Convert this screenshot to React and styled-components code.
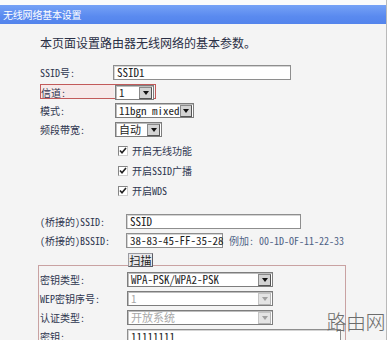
import React from "react";
import styled, { createGlobalStyle } from "styled-components";

const Global = createGlobalStyle`
  html, body { margin: 0; padding: 0; background: #ffffff; }
  body { font-family: "Noto Sans Mono CJK SC", "Noto Sans CJK SC", "Liberation Mono", monospace; }
`;

const FONT = `"Noto Sans Mono CJK SC", "Noto Sans CJK SC", "Liberation Mono", monospace`;

const Page = styled.div`
  position: relative;
  width: 386px;
  height: 340px;
  overflow: hidden;
  background: #f4f4f4;
  border-right: 1px solid #b9b9b9;
  font-family: ${FONT};
  font-size: 10px;
  color: #2f3650;
`;

const TopGap = styled.div`
  height: 5px;
  background: #fbfbfb;
`;

const Header = styled.div`
  height: 19px;
  line-height: 19px;
  padding-left: 3px;
  background: linear-gradient(#76a2f6, #5a8aef 60%, #5384ec);
  color: #ffffff;
  font-family: "Noto Sans CJK SC", sans-serif;
  font-size: 10px;
  letter-spacing: -0.2px;
`;

const Desc = styled.div`
  margin-top: 11px;
  padding-left: 40px;
  height: 16px;
  line-height: 16px;
  font-size: 12px;
  color: #2a2f45;
`;

const Section = styled.div`
  display: flex;
  flex-direction: column;
  margin-top: ${(p) => p.$top || 0}px;
  padding-left: 40px;
`;

const Row = styled.div`
  display: grid;
  grid-template-columns: ${(p) => p.$label}px auto 1fr;
  align-items: center;
  height: ${(p) => p.$h || 19}px;
`;

const Label = styled.span`
  white-space: nowrap;
  line-height: 14px;
  font-size: 10px;
`;

const TextInput = styled.div`
  box-sizing: border-box;
  width: ${(p) => p.$w}px;
  height: 15px;
  line-height: 13px;
  padding-left: 3px;
  margin-left: ${(p) => p.$ml || 0}px;
  background: #ffffff;
  border: 1px solid #8e8e8e;
  box-shadow: inset 1px 1px 0 #d4d4d4;
  color: #1d1d1d;
  font-size: 11px;
  white-space: nowrap;
`;

const SelectBox = styled.div`
  box-sizing: border-box;
  display: flex;
  align-items: center;
  width: ${(p) => p.$w}px;
  height: 15px;
  background: #ffffff;
  border: 1px solid #7d7d7d;
  box-shadow: inset 1px 1px 0 #bdbdbd;
  color: ${(p) => (p.$disabled ? "#a8a8a8" : "#1d1d1d")};
  font-size: 11px;
`;

const SelectText = styled.span`
  flex: 1;
  padding-left: 3px;
  line-height: 13px;
  white-space: nowrap;
`;

const Arrow = styled.span`
  box-sizing: border-box;
  width: 13px;
  height: 12px;
  margin-right: 1px;
  display: flex;
  align-items: center;
  justify-content: center;
  background: ${(p) => (p.$disabled ? "#e4e4e4" : "#d3d3d3")};
  border: 1px solid ${(p) => (p.$disabled ? "#c4c4c4" : "#8a8a8a")};
  border-right-color: ${(p) => (p.$disabled ? "#b4b4b4" : "#555")};
  border-bottom-color: ${(p) => (p.$disabled ? "#b4b4b4" : "#555")};
`;

const Tri = styled.span`
  width: 0;
  height: 0;
  border-left: 3px solid transparent;
  border-right: 3px solid transparent;
  border-top: 4px solid ${(p) => (p.$disabled ? "#a0a0a0" : "#111")};
`;

function Select({ w, value, disabled }) {
  return (
    <SelectBox $w={w} $disabled={disabled}>
      <SelectText>{value}</SelectText>
      <Arrow $disabled={disabled}>
        <Tri $disabled={disabled} />
      </Arrow>
    </SelectBox>
  );
}

const Highlight = styled.div`
  box-sizing: border-box;
  display: grid;
  grid-template-columns: 74px auto;
  align-items: center;
  width: 116px;
  height: 15px;
  border: 1px solid #c25a5a;
  background: linear-gradient(90deg, #f6e9e9 0, #f6e9e9 73px, #f4f4f4 73px);
`;

const CheckRow = styled.div`
  display: flex;
  align-items: center;
  height: 20px;
  padding-left: 78px;
  gap: 4px;
`;

const CheckBox = styled.span`
  box-sizing: border-box;
  width: 10px;
  height: 10px;
  background: #ffffff;
  border: 1px solid #858585;
  border-right-color: #cfcfcf;
  border-bottom-color: #cfcfcf;
  display: flex;
  align-items: center;
  justify-content: center;
`;

const ExampleText = styled.span`
  margin-left: 6px;
  font-size: 10px;
  color: #4e6285;
  white-space: nowrap;
`;

const Button = styled.div`
  box-sizing: border-box;
  width: 25px;
  height: 14px;
  margin-left: 88px;
  margin-top: 3px;
  display: flex;
  align-items: center;
  justify-content: center;
  background: #e7e7ea;
  border: 1px solid #9a9aa0;
  border-right-color: #5c5c64;
  border-bottom-color: #5c5c64;
  font-family: "Noto Sans CJK SC", sans-serif;
  font-size: 11px;
  color: #222;
`;

const KeyBox = styled.div`
  box-sizing: border-box;
  margin-left: 38px;
  width: 308px;
  height: 90px;
  border: 1px solid #c9a2a2;
  border-bottom: none;
  padding-top: 4px;
  padding-left: 1px;
  display: flex;
  flex-direction: column;
`;

const Watermark = styled.div`
  position: absolute;
  right: 1px;
  bottom: 4px;
  font-family: "Noto Sans CJK SC", sans-serif;
  font-weight: 300;
  font-size: 20px;
  letter-spacing: -0.5px;
  color: #6c6c6c;
`;

function Check() {
  return (
    <CheckBox>
      <svg width="8" height="8" viewBox="0 0 8 8">
        <path d="M1 3.5 L3 5.8 L7 1" fill="none" stroke="#222" strokeWidth="1.6" />
      </svg>
    </CheckBox>
  );
}

export default function App() {
  return (
    <>
      <Global />
      <Page>
        <TopGap />
        <Header>无线网络基本设置</Header>
        <Desc>本页面设置路由器无线网络的基本参数。</Desc>

        <Section $top={12}>
          <Row $label={73}>
            <Label>SSID号:</Label>
            <TextInput $w={178}>SSID1</TextInput>
          </Row>
          <Row $label={0}>
            <span />
            <Highlight>
              <Label>信道:</Label>
              <Select w={39} value="1" />
            </Highlight>
          </Row>
          <Row $label={75}>
            <Label>模式:</Label>
            <Select w={79} value="11bgn mixed" />
          </Row>
          <Row $label={75}>
            <Label>频段带宽:</Label>
            <Select w={47} value="自动" />
          </Row>
        </Section>

        <Section $top={2}>
          <CheckRow>
            <Check />
            <Label>开启无线功能</Label>
          </CheckRow>
          <CheckRow>
            <Check />
            <Label>开启SSID广播</Label>
          </CheckRow>
          <CheckRow>
            <Check />
            <Label>开启WDS</Label>
          </CheckRow>
        </Section>

        <Section $top={11}>
          <Row $label={86}>
            <Label>(桥接的)SSID:</Label>
            <TextInput $w={175}>SSID</TextInput>
          </Row>
          <Row $label={86}>
            <Label>(桥接的)BSSID:</Label>
            <TextInput $w={97}>38-83-45-FF-35-28</TextInput>
            <ExampleText>例加: 00-1D-OF-11-22-33</ExampleText>
          </Row>
          <Row $label={0} $h={15}>
            <span />
            <Button>扫描</Button>
          </Row>
        </Section>

        <KeyBox>
          <Row $label={87}>
            <Label>密钥类型:</Label>
            <Select w={146} value="WPA-PSK/WPA2-PSK" />
          </Row>
          <Row $label={87}>
            <Label>WEP密钥序号:</Label>
            <Select w={146} value="1" disabled />
          </Row>
          <Row $label={87}>
            <Label>认证类型:</Label>
            <Select w={146} value="开放系统" disabled />
          </Row>
          <Row $label={87}>
            <Label>密钥:</Label>
            <TextInput $w={214}>11111111</TextInput>
          </Row>
        </KeyBox>

        <Watermark>路由网</Watermark>
      </Page>
    </>
  );
}
